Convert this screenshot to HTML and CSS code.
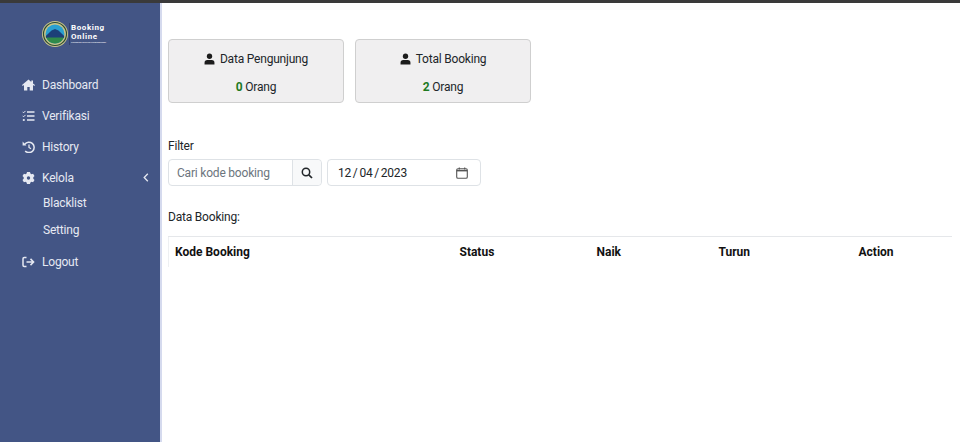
FILE: index.html
```html
<!DOCTYPE html>
<html lang="id">
<head>
  <meta charset="UTF-8" />
  <meta name="viewport" content="width=device-width, initial-scale=1" />
  <title>Booking Online</title>
  <link rel="stylesheet" href="styles.css">
</head>
<body>
  <div class="topline"></div>
  <div class="layout">

    <!-- Sidebar -->
    <aside class="sidebar">
      <div class="brand">
        <svg class="brand-logo" viewBox="0 0 26 26" width="26" height="26">
          <circle cx="13" cy="13" r="13" fill="#c9c58a"/>
          <circle cx="13" cy="13" r="11.500" fill="none" stroke="#2c4a33" stroke-width="1.200"/>
          <circle cx="13" cy="13" r="9.500" fill="#2aa0d0"/>
          <path d="M3.800 15 L9.500 9.500 L13 8 L16.500 9.500 L22.200 15 L22 17 H4 Z" fill="#1c3f78"/>
          <path d="M4.200 16.500 H21.800 A9.500 9.500 0 0 1 4.200 16.500 Z" fill="#2f8a4a"/>
        </svg>
        <div class="brand-text">
          <div class="brand-name">Booking</div>
          <div class="brand-name">Online</div>
          <div class="brand-sub">Pendakian Gunung Penanggungan</div>
        </div>
      </div>

      <nav class="menu">
        <a class="menu-item">
          <svg class="menu-icon" viewBox="0 0 13 11"><path d="M6.500 0 0 5.600l.7.9L2 5.400V11h3.300V7.500h2.400V11H11V5.400l1.300 1.100.7-.9L11 3.900V1H9.300v1.400Z" fill="currentColor"/></svg>
          <span>Dashboard</span>
        </a>
        <a class="menu-item">
          <svg class="menu-icon" viewBox="0 0 13 11"><path d="M5 1.500h7.500M5 5.500h7.500M5 9.500h7.500" stroke="currentColor" stroke-width="1.300" fill="none"/><path d="M.6 1.300l1 1L3.500.4M.6 5.300l1 1 1.900-1.900" stroke="currentColor" stroke-width="1" fill="none"/><circle cx="1.800" cy="9.500" r="1.100" fill="currentColor"/></svg>
          <span>Verifikasi</span>
        </a>
        <a class="menu-item">
          <svg class="menu-icon" viewBox="0 0 13 12"><path d="M2.800 3.200A5.200 5.200 0 1 1 3.200 10" stroke="currentColor" stroke-width="1.500" fill="none"/><path d="M.6.6V4.400H4.400Z" fill="currentColor"/><path d="M7 3.500v3l2 1.300" stroke="currentColor" stroke-width="1.300" fill="none"/></svg>
          <span>History</span>
        </a>
        <a class="menu-item">
          <svg class="menu-icon" viewBox="0 0 13 12"><path fill-rule="evenodd" d="M5 0h3l.4 1.600 1.100.6 1.600-.5 1.400 2.400-1.200 1.100v1.600l1.200 1.100-1.400 2.400-1.600-.5-1.100.6L8 12H5l-.4-1.600-1.100-.6-1.600.5L.5 7.900l1.200-1.100V5.200L.5 4.100l1.400-2.400 1.600.5 1.100-.6ZM6.500 4.300a1.700 1.700 0 1 0 0 3.400 1.700 1.700 0 0 0 0-3.400Z" fill="currentColor"/></svg>
          <span>Kelola</span>
          <svg class="menu-caret" viewBox="0 0 6 9"><path d="M4.800.8 1.200 4.500l3.600 3.700" stroke="currentColor" stroke-width="1.300" fill="none"/></svg>
        </a>
        <div class="submenu">
          <a class="submenu-item">Blacklist</a>
          <a class="submenu-item">Setting</a>
        </div>
        <a class="menu-item">
          <svg class="menu-icon" viewBox="0 0 13 11"><path d="M4.500 1H2.200A1.200 1.200 0 0 0 1 2.200v6.600A1.200 1.200 0 0 0 2.200 10h2.300" stroke="currentColor" stroke-width="1.500" fill="none"/><path d="M4.500 5.500h7M8.500 2.400l3.100 3.100-3.100 3.100" stroke="currentColor" stroke-width="1.500" fill="none"/></svg>
          <span>Logout</span>
        </a>
      </nav>
    </aside>

    <!-- Konten -->
    <main class="content">
      <div class="cards">
        <div class="card">
          <div class="card-title">
            <svg class="person" viewBox="0 0 12 12"><circle cx="6" cy="3" r="2.900" fill="currentColor"/><path d="M.6 12V10a3 3 0 0 1 3-3h4.800a3 3 0 0 1 3 3v2Z" fill="currentColor"/></svg>
            Data Pengunjung
          </div>
          <div class="card-value"><b>0</b> Orang</div>
        </div>
        <div class="card">
          <div class="card-title">
            <svg class="person" viewBox="0 0 12 12"><circle cx="6" cy="3" r="2.900" fill="currentColor"/><path d="M.6 12V10a3 3 0 0 1 3-3h4.800a3 3 0 0 1 3 3v2Z" fill="currentColor"/></svg>
            Total Booking
          </div>
          <div class="card-value"><b>2</b> Orang</div>
        </div>
      </div>

      <div class="filter-label">Filter</div>
      <div class="filter-row">
        <div class="search">
          <div class="search-input">Cari kode booking</div>
          <div class="search-btn">
            <svg viewBox="0 0 12 12" width="12" height="12"><circle cx="5" cy="5" r="3.700" fill="none" stroke="currentColor" stroke-width="1.500"/><path d="M7.800 7.800 11 11" stroke="currentColor" stroke-width="1.700"/></svg>
          </div>
        </div>
        <div class="date">
          <span>12 / 04 / 2023</span>
          <svg viewBox="0 0 12 12" width="12" height="12"><rect x="0.700" y="1.700" width="10.600" height="9.600" rx="1.300" fill="none" stroke="currentColor" stroke-width="1.100"/><path d="M.7 2.900h10.600V4.400H.7Z" fill="currentColor"/><path d="M3.300.4v2M8.700.4v2" stroke="currentColor" stroke-width="1.100"/></svg>
        </div>
      </div>

      <div class="table-label">Data Booking:</div>
      <table class="booking-table">
        <thead>
          <tr>
            <th class="col-kode">Kode Booking</th>
            <th class="col-status">Status</th>
            <th class="col-naik">Naik</th>
            <th class="col-turun">Turun</th>
            <th>Action</th>
          </tr>
        </thead>
      </table>
    </main>

  </div>
</body>
</html>
```

FILE: styles.css
```css
* {
  box-sizing: border-box;
}

body {
  margin: 0;
  height: 442px;
  overflow: hidden;
  background: #fff;
  font-family: Roboto, "Noto Sans", sans-serif;
  font-size: 12px;
  letter-spacing: -0.2px;
  color: #212529;
}

.topline {
  height: 3px;
  background: #3a3a3a;
}

.layout {
  display: flex;
  height: 439px;
}

/* Sidebar */
.sidebar {
  width: 160px;
  flex-shrink: 0;
  background: #435585;
  color: #e6e9f2;
}

.brand {
  display: flex;
  align-items: center;
  padding: 18px 0 0 42px;
  height: 44px;
}

.brand-logo {
  flex-shrink: 0;
}

.brand-text {
  margin-left: 1px;
  padding-left: 1px;
  border-left: 1px solid #2f3f6b;
  color: #fff;
}

.brand-name {
  font-weight: 700;
  font-size: 8px;
  line-height: 9.400px;
  letter-spacing: 0.6px;
}

.brand-sub {
  font-size: 2.300px;
  line-height: 4px;
  letter-spacing: 0;
  white-space: nowrap;
}

.menu {
  margin-top: 22px;
}

.menu-item {
  display: flex;
  align-items: center;
  height: 31px;
  padding-left: 22px;
}

.menu-icon {
  width: 13px;
  height: 12px;
  margin-right: 7px;
  flex-shrink: 0;
}

.menu-caret {
  width: 6px;
  height: 9px;
  margin-left: auto;
  margin-right: 11px;
}

.submenu {
  margin-top: -4px;
  margin-bottom: 3px;
}

.submenu-item {
  display: flex;
  align-items: center;
  height: 27px;
  padding-left: 43px;
}

/* Konten */
.content {
  flex: 1;
  padding: 36px 8px 0 6px;
  border-left: 2px solid #d5daee;
}

.cards {
  display: flex;
  gap: 11px;
}

.card {
  width: 176px;
  height: 64px;
  background: #f0eff0;
  border: 1px solid #cfcfcf;
  border-radius: 4px;
  display: flex;
  flex-direction: column;
  align-items: center;
  justify-content: space-between;
  padding: 12px 0 8px;
}

.card-title {
  display: flex;
  align-items: center;
  gap: 5px;
}

.person {
  width: 11px;
  height: 12px;
  color: #1c1c1c;
}

.card-value b {
  color: #1f7a1f;
}

.filter-label {
  margin-top: 34px;
  line-height: 18px;
}

.filter-row {
  display: flex;
  gap: 5px;
  margin-top: 4px;
}

.search {
  display: flex;
  width: 154px;
  height: 27px;
  border: 1px solid #dee2e6;
  border-radius: 4px;
}

.search-input {
  flex: 1;
  padding-left: 8px;
  line-height: 26px;
  color: #6c757d;
}

.search-btn {
  width: 29px;
  background: #f8f9fa;
  border-left: 1px solid #dee2e6;
  border-radius: 0 4px 4px 0;
  display: flex;
  align-items: center;
  justify-content: center;
}

.date {
  width: 154px;
  height: 27px;
  border: 1px solid #dee2e6;
  border-radius: 4px;
  padding: 0 12px 0 10px;
  display: flex;
  align-items: center;
  justify-content: space-between;
  word-spacing: -1px;
}

.date svg {
  color: #555;
}

.table-label {
  margin-top: 22px;
  line-height: 18px;
}

.booking-table {
  width: 784px;
  margin-top: 10px;
  border-collapse: collapse;
  table-layout: fixed;
  border-top: 1px solid #e5e7ea;
  border-left: 1px solid #eef0f2;
}

.booking-table th {
  text-align: left;
  font-weight: 700;
  padding: 7px 6px;
  line-height: 16px;
  letter-spacing: 0;
  color: #111;
}

.col-kode {
  width: 285px;
}

.col-status {
  width: 137px;
}

.col-naik {
  width: 122px;
}

.col-turun {
  width: 140px;
}
```
